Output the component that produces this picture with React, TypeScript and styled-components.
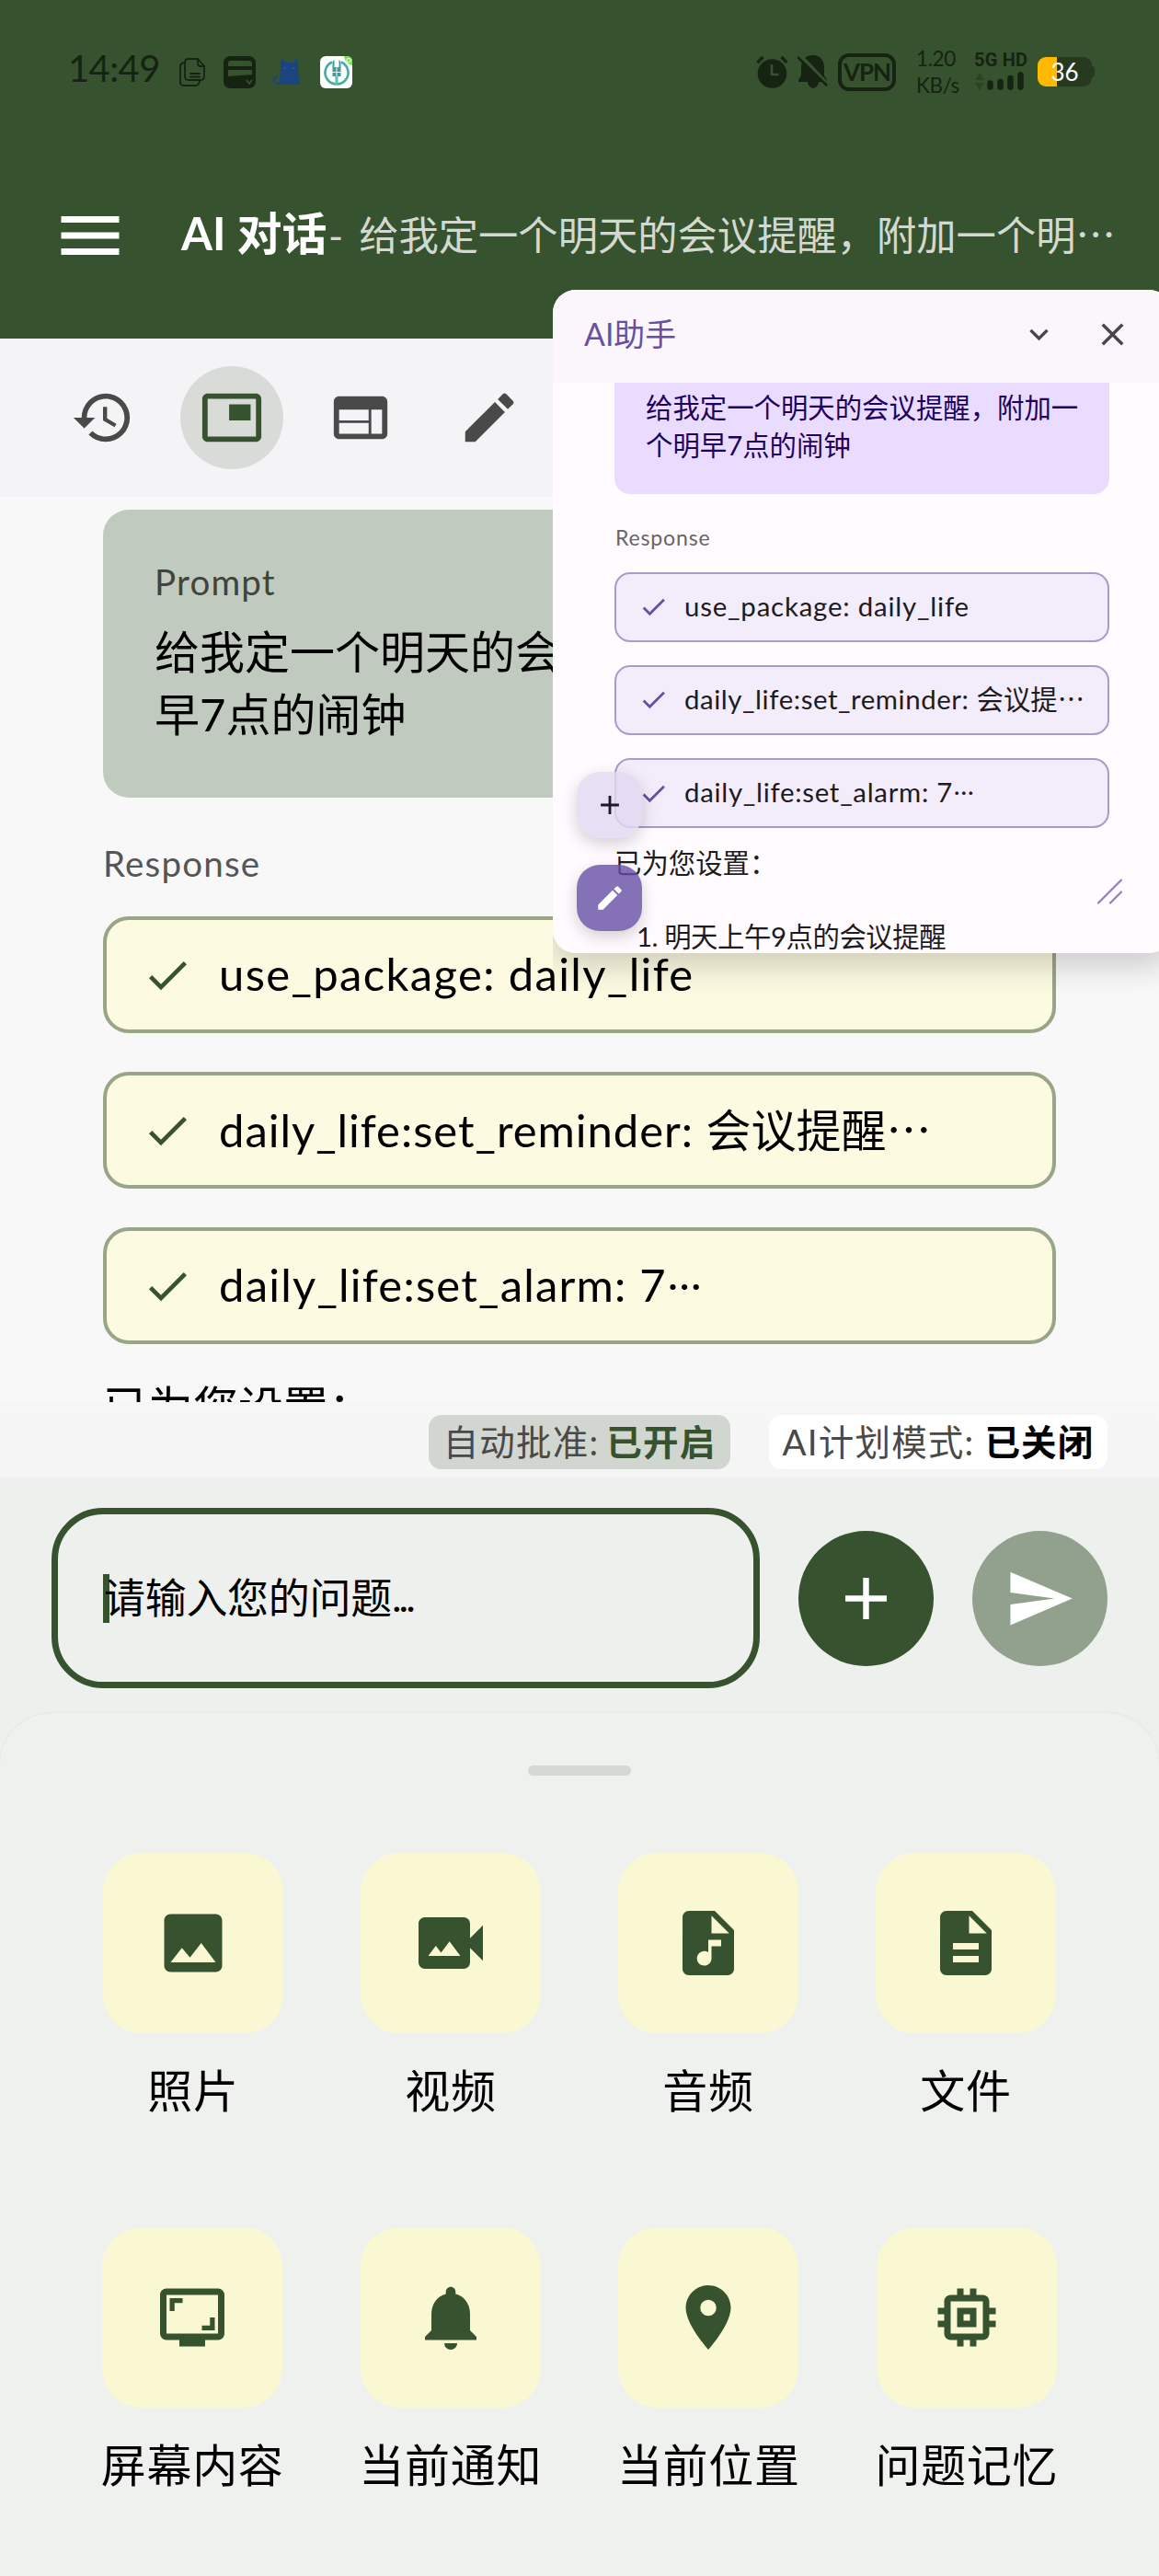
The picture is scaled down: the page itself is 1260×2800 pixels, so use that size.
import React from "react";
import styled, { createGlobalStyle } from "styled-components";
import {
  MdAdd,
  MdAudioFile,
  MdCheck,
  MdDescription,
  MdEdit,
  MdHistory,
  MdImage,
  MdLocationOn,
  MdMemory,
  MdMenu,
  MdNotifications,
  MdPictureInPicture,
  MdScreenshotMonitor,
  MdSend,
  MdVideoCameraBack,
  MdWeb,
  MdOutlineKeyboardArrowDown,
  MdClose,
} from "react-icons/md";

const green = "#37522e";
const statusInk = "#162312";
const purple = "#6750a4";

const GlobalStyle = createGlobalStyle`
  *, *::before, *::after { box-sizing: border-box; }
  html, body { margin: 0; padding: 0; }
  body {
    width: 1260px;
    font-family: Lato, "Noto Sans CJK SC", sans-serif;
    color: #000;
    background: #eef0ed;
  }
  svg { display: block; flex: none; }
`;

const Screen = styled.main`
  position: relative;
  display: flex;
  flex-direction: column;
  width: 1260px;
  height: 2800px;
  overflow: hidden;
  background: #eef0ed;
  > * { flex-shrink: 0; }
`;

const Run = styled.span<{ $ls?: number }>`
  letter-spacing: ${(p) => p.$ls ?? 0}px;
`;

/* Chinese runs, where the ellipsis sits at mid height */
const Cjk = styled.span`
  font-family: "Noto Sans CJK SC", sans-serif;
  letter-spacing: 0;
`;

/* An ellipsis after a Latin run, raised to the same mid height */
const RaisedDots = styled.span`
  position: relative;
  top: -0.27em;
  margin-left: 0.02em;
  letter-spacing: 0.06em;
`;

const Gap = styled.span<{ $w: number }>`
  flex: none;
  width: ${(p) => p.$w}px;
`;

/* ---------- header ---------- */

const Header = styled.header`
  height: 368px;
  background: ${green};
`;

const StatusBar = styled.div`
  display: flex;
  align-items: center;
  justify-content: space-between;
  height: 156px;
  padding: 0 70px 0 74px;
  color: ${statusInk};
`;

const StatusGroup = styled.div`
  display: flex;
  align-items: center;
`;

const Clock = styled.span`
  width: 121px;
  font-size: 40px;
  line-height: 44px;
  letter-spacing: -0.6px;
  margin-top: -8px;
`;

const Vpn = styled.span`
  display: flex;
  align-items: center;
  justify-content: center;
  width: 63px;
  height: 41px;
  margin-left: 11px;
  border: 4px solid ${statusInk};
  border-radius: 12px;
  font-size: 26px;
  font-weight: 700;
  letter-spacing: -1px;
`;

const Speed = styled.div`
  display: flex;
  flex-direction: column;
  width: 44px;
  margin-left: 22px;
  margin-right: 1px;
  font-size: 22.5px;
  line-height: 29px;
  letter-spacing: -0.4px;
  white-space: nowrap;
`;

const Signal = styled.div`
  display: flex;
  flex-direction: column;
  gap: 5px;
  width: 58px;
  margin: -2px 0 0 18px;
  font: 700 20px/16px Roboto, sans-serif;
  letter-spacing: 0.2px;
  white-space: nowrap;
`;

const Battery = styled.div`
  display: flex;
  align-items: center;
  justify-content: center;
  width: 59px;
  height: 32px;
  margin-left: 11px;
  border-radius: 9px;
  background: linear-gradient(90deg, #ffb900 21px, #26391f 21px);
  color: #fff;
  font-size: 26px;
  line-height: 32px;
`;

const BatteryCap = styled.div`
  width: 3px;
  height: 12px;
  border-radius: 0 3px 3px 0;
  background: #26391f;
`;

const TitleRow = styled.div`
  display: flex;
  align-items: center;
  height: 200px;
  padding-left: 56px;
  color: #fff;
  white-space: nowrap;
`;

const Title = styled.h1`
  width: 160px;
  margin: -6px 0 0 57px;
  font-size: 49px;
  font-weight: 700;
  line-height: 68px;
`;

const Subtitle = styled.span`
  margin-top: -5px;
  font-size: 43.3px;
  line-height: 60px;
  word-spacing: 6px;
  color: rgba(255, 255, 255, 0.8);
`;

/* ---------- toolbar ---------- */

const Toolbar = styled.nav`
  display: flex;
  align-items: center;
  gap: 28px;
  height: 172px;
  padding-left: 56px;
  background: #f4f4f7;
`;

const ToolButton = styled.button<{ $active?: boolean }>`
  display: flex;
  align-items: center;
  justify-content: center;
  width: 112px;
  height: 112px;
  padding: 0;
  border: 0;
  border-radius: 50%;
  background: ${(p) => (p.$active ? "#d9dbd8" : "transparent")};
  color: ${(p) => (p.$active ? green : "#494949")};
`;

/* ---------- conversation ---------- */

const Chat = styled.section`
  display: flex;
  flex-direction: column;
  height: 984px;
  padding: 14px 112px 0;
  overflow: hidden;
  background: #f8f8f8;
`;

const PromptCard = styled.div`
  display: flex;
  flex-direction: column;
  gap: 20px;
  flex: none;
  height: 313px;
  padding: 55px 0 0 56px;
  border-radius: 28px;
  background: #c1cabf;
`;

const SmallLabel = styled.div`
  font-size: 38.5px;
  line-height: 46px;
  letter-spacing: 1.2px;
  color: #3f443e;
`;

const ResponseLabel = styled(SmallLabel)`
  flex: none;
  margin: 48px 0 35px;
  color: #555;
`;

const Body = styled.p`
  flex: none;
  margin: 0;
  font-size: 49px;
  line-height: 67.5px;
  white-space: nowrap;
`;

const ToolCalls = styled.div`
  display: flex;
  flex-direction: column;
  flex: none;
  gap: 42.2px;
  margin-bottom: 35px;
`;

const ToolCall = styled.div`
  display: flex;
  align-items: center;
  gap: 28px;
  height: 127px;
  padding-left: 38px;
  border: 4px solid #99a587;
  border-radius: 28px;
  background: #fcfae1;
  font-size: 49px;
  line-height: 66px;
  white-space: nowrap;
  svg { color: ${green}; }
  > span { margin-top: -4px; }
`;

const ModeStrip = styled.div`
  display: flex;
  justify-content: flex-end;
  gap: 42px;
  height: 84px;
  padding: 14px 56px 0;
  background: linear-gradient(#f6f6f6, #f5f5f5 80px, #eeefed);
`;

const Chip = styled.div<{ $on?: boolean }>`
  display: flex;
  align-items: center;
  justify-content: center;
  gap: ${(p) => (p.$on ? 8 : 11)}px;
  width: ${(p) => (p.$on ? 328 : 368)}px;
  height: 59px;
  padding-bottom: 5px;
  border-radius: 14px;
  background: ${(p) => (p.$on ? "#d1d6d0" : "#fff")};
  color: #494949;
  font-size: 38.5px;
  letter-spacing: 1.2px;
  white-space: nowrap;
  b { color: ${(p) => (p.$on ? green : "#000")}; }
`;

/* ---------- composer ---------- */

const Composer = styled.div`
  display: flex;
  align-items: center;
  gap: 42px;
  height: 254px;
  padding: 4px 56px 0;
`;

const InputBox = styled.div`
  display: flex;
  align-items: center;
  width: 770px;
  height: 196px;
  padding-left: 49px;
  border: 7px solid ${green};
  border-radius: 56px;
  font-size: 45px;
  letter-spacing: -0.3px;
  white-space: nowrap;
  > span { margin-top: -5px; }
`;

const Caret = styled.i`
  width: 7px;
  height: 53px;
  margin-right: -6px;
  background: ${green};
`;

const RoundButton = styled.button<{ $muted?: boolean }>`
  display: flex;
  align-items: center;
  justify-content: center;
  width: 147px;
  height: 147px;
  padding: 0;
  border: 0;
  border-radius: 50%;
  background: ${(p) => (p.$muted ? "#92a18e" : green)};
  color: #fff;
`;

/* ---------- attachment sheet ---------- */

const Sheet = styled.section`
  display: flex;
  flex-direction: column;
  height: 938px;
  padding: 57px 28px 0;
  border-radius: 56px 56px 0 0;
  background: #eff1ee;
  box-shadow: 0 0 2px rgba(0, 0, 0, 0.1);
`;

const Handle = styled.div`
  align-self: center;
  flex: none;
  width: 112px;
  height: 11px;
  margin-bottom: 84px;
  border-radius: 6px;
  background: #d6d8d5;
`;

const SheetRow = styled.div`
  display: flex;
  justify-content: space-evenly;
  margin-bottom: 115px;
`;

const Attachment = styled.div`
  display: flex;
  flex-direction: column;
  align-items: center;
  min-width: 196px;
  font-size: 49px;
  line-height: 68px;
  letter-spacing: 0.7px;
  white-space: nowrap;
`;

const Tile = styled.div`
  display: flex;
  align-items: center;
  justify-content: center;
  width: 196px;
  height: 196px;
  margin-bottom: 28px;
  border-radius: 42px;
  background: #faf8d3;
  color: ${green};
`;

/* ---------- floating assistant ---------- */

const FloatingLayer = styled.div`
  position: absolute;
  top: 315px;
  left: 601px;
  width: 659px;
  height: 800px;
  overflow: hidden;
`;

const FloatingShadow = styled.div`
  width: 673px;
  height: 721px;
  border-radius: 25px;
  box-shadow: 0 14px 34px rgba(0, 0, 0, 0.18);
`;

const Floating = styled.aside`
  position: relative;
  width: 673px;
  height: 721px;
  overflow: hidden;
  border-radius: 25px;
  background: #fffbff;
`;

const FloatingHeader = styled.div`
  display: flex;
  align-items: center;
  height: 101px;
  padding: 0 44px 4px 34px;
  background: #fbf6fb;
  color: #49454f;
`;

const FloatingTitle = styled.span`
  flex: 1;
  margin-top: -4px;
  font-size: 33.8px;
  color: ${purple};
`;

const FloatingBody = styled.div`
  display: flex;
  flex-direction: column;
  padding: 0 68px 0 67px;
  font-size: 29.4px;
  line-height: 41px;
  white-space: nowrap;
  color: #1d1b20;
`;

const Bubble = styled.div`
  height: 121px;
  padding: 6px 0 0 34px;
  border-radius: 0 0 17px 17px;
  background: #eadcff;
  color: #21005d;
`;

const MiniLabel = styled.div`
  margin: 33px 0 24px 1px;
  font-size: 23.1px;
  line-height: 28px;
  letter-spacing: 0.8px;
  color: #67646a;
`;

const MiniCalls = styled.div`
  display: flex;
  flex-direction: column;
  gap: 25.7px;
  margin-bottom: 17px;
`;

const MiniCall = styled.div`
  display: flex;
  align-items: center;
  gap: 17px;
  height: 75.5px;
  padding-left: 24px;
  border: 2px solid #a99bca;
  border-radius: 17px;
  background: #f3ecfa;
  svg { color: ${purple}; }
  > span { margin-top: -3px; }
`;

const ListLine = styled.div`
  margin-top: 39px;
  padding-left: 24px;
  letter-spacing: -0.45px;
`;

const Fab = styled.button<{ $top: number; $primary?: boolean }>`
  position: absolute;
  left: 26px;
  top: ${(p) => p.$top}px;
  display: flex;
  align-items: center;
  justify-content: center;
  width: 71px;
  height: 72px;
  padding: 0;
  border: 0;
  border-radius: 25px;
  background: ${(p) => (p.$primary ? "rgba(103,80,164,.8)" : "rgba(226,216,242,.82)")};
  color: ${(p) => (p.$primary ? "#fff" : "#1d192b")};
  box-shadow: 0 6px 18px rgba(0, 0, 0, 0.18);
`;

const ResizeGrip = styled.svg`
  position: absolute;
  left: 591px;
  top: 640px;
`;

/* ---------- drawings ---------- */

const DocsIcon = () => (
  <svg width="28" height="33" viewBox="0 0 28 33" fill="none" stroke={statusInk} strokeWidth="1.8" strokeLinejoin="round">
    <path d="M10 2h10l7 8v11q0 4-4 4H10q-4 0-4-4V6q0-4 4-4Z" />
    <path d="M20 2v5q0 3 3 3h4M6 6q-5 0-5 5v16q0 4 4 4h13q3 0 4-5M12 18h10M12 21.500h10" strokeLinecap="round" />
  </svg>
);

const CardAppIcon = () => (
  <svg width="35" height="35" viewBox="0 0 35 35">
    <path
      fill={statusInk}
      fillRule="evenodd"
      d="M8 0h19q8 0 8 8v19q0 8-8 8H8q-8 0-8-8V8q0-8 8-8ZM5 11h26V8q0-3-3-3H8Q5 5 5 8ZM5 15v7l26-2v-5Z"
    />
    <path d="M25 26l3 4 3-4" fill="none" stroke={green} strokeWidth="1.8" />
  </svg>
);

const CatIcon = () => (
  <svg width="29" height="28" viewBox="0 0 29 28">
    <path fill="#1c4480" d="M9 0l5 4h7l5-4q1 4 1 8 .3 10 2 20H8q-2-1-1-4 1-9 1-16 0-4 1-8Z" />
    <path d="M5 19q-4 0-4 4 0 4 8 4" fill="none" stroke="#1c4480" strokeWidth="2" />
    <path d="M12 10h1.500M21 10h1.500" stroke="#38619a" strokeWidth="1.600" />
  </svg>
);

const BankIcon = () => (
  <svg width="35" height="35" viewBox="0 0 35 35">
    <rect width="35" height="35" rx="6" fill="#fff" />
    <path d="M26 0h3q6 0 6 6v4Q27 8 26 0Z" fill="#7ed957" />
    <circle cx="31" cy="4.500" r="2.200" fill="none" stroke="#d9f7cf" strokeWidth="1.200" />
    <path d="M13 6.500A12.500 12.500 0 1 0 23 6.500" fill="none" stroke="#48aaa5" strokeWidth="2.600" />
    <path d="M18 20v11" stroke="#5cc0ab" strokeWidth="3" />
    <path d="M13.500 6l2-2v8h5V4l2 2v16h-9Z" fill="#3f9c9c" />
    <path d="M18 12v10M13 17.500h10" stroke="#e6f5f3" strokeWidth="1" />
  </svg>
);

const AlarmIcon = () => (
  <svg width="35" height="36" viewBox="0 0 35 36">
    <circle cx="17.500" cy="20" r="15.800" fill={statusInk} />
    <path d="M1.500 8l6-6M33.500 8l-6-6" stroke={statusInk} strokeWidth="3.200" />
    <path d="M17 10v11h7.500" fill="none" stroke={green} strokeWidth="2.600" />
  </svg>
);

const MutedBellIcon = () => (
  <svg width="33" height="36" viewBox="0 0 33 36">
    <path fill={statusInk} d="M17 0C25 0 29 6 29 13v9l3 5v2h-9c-1 9-11 9-12 0H1v-2l3-5v-9C4 6 8 0 17 0Z" />
    <path d="M3 0l31 33" stroke={green} strokeWidth="4" />
    <path d="M0 2l32 31" stroke={statusInk} strokeWidth="2.600" />
  </svg>
);

const SignalBars = () => (
  <svg width="57" height="20" viewBox="0 0 57 20">
    <path d="M6 1l5 8H1ZM6 20l5-8H1Z" fill="#2a4422" />
    <path d="M17.500 12.500v4M28.500 11v5.500M39.500 7v9.500M50.500 3.500v13" stroke={statusInk} strokeWidth="6.500" strokeLinecap="round" />
  </svg>
);

const attachments = [
  [
    { label: "照片", Icon: MdImage },
    { label: "视频", Icon: MdVideoCameraBack },
    { label: "音频", Icon: MdAudioFile },
    { label: "文件", Icon: MdDescription },
  ],
  [
    { label: "屏幕内容", Icon: MdScreenshotMonitor },
    { label: "当前通知", Icon: MdNotifications },
    { label: "当前位置", Icon: MdLocationOn },
    { label: "问题记忆", Icon: MdMemory },
  ],
];

const calls = [
  { name: "use_package: daily_life", arg: "", miniArg: "", track: 1.35 },
  { name: "daily_life:set_reminder: ", arg: "会议提醒…", miniArg: "会议提…", track: 0.95 },
  { name: "daily_life:set_alarm: 7", arg: "", miniArg: "", track: 1.2, dots: true },
];

export default function App() {
  return (
    <Screen lang="zh-CN">
      <GlobalStyle />
      <Header>
        <StatusBar>
          <StatusGroup>
            <Clock>14:49</Clock>
            <DocsIcon />
            <Gap $w={20} />
            <CardAppIcon />
            <Gap $w={19} />
            <CatIcon />
            <Gap $w={22} />
            <BankIcon />
          </StatusGroup>
          <StatusGroup>
            <AlarmIcon />
            <Gap $w={10} />
            <MutedBellIcon />
            <Vpn>VPN</Vpn>
            <Speed>
              <span>1.20</span>
              <span>KB/s</span>
            </Speed>
            <Signal>
              <span>5G HD</span>
              <SignalBars />
            </Signal>
            <Battery>36</Battery>
            <BatteryCap />
          </StatusGroup>
        </StatusBar>
        <TitleRow>
          <MdMenu size={84} />
          <Title>AI 对话</Title>
          <Subtitle>
            - 给我定一个明天的会议提醒，附加一个明<Cjk>…</Cjk>
          </Subtitle>
        </TitleRow>
      </Header>

      <Toolbar>
        <ToolButton><MdHistory size={70} /></ToolButton>
        <ToolButton $active><MdPictureInPicture size={70} /></ToolButton>
        <ToolButton><MdWeb size={70} /></ToolButton>
        <ToolButton><MdEdit size={70} /></ToolButton>
      </Toolbar>

      <Chat>
        <PromptCard>
          <SmallLabel>Prompt</SmallLabel>
          <Body>
            给我定一个明天的会议提醒，附加一个明
            <br />
            早7点的闹钟
          </Body>
        </PromptCard>
        <ResponseLabel>Response</ResponseLabel>
        <ToolCalls>
          {calls.map((c) => (
            <ToolCall key={c.name}>
              <MdCheck size={56} />
              <span>
                <Run $ls={c.track}>{c.name}</Run>
                {c.arg && <Cjk>{c.arg}</Cjk>}
                {c.dots && <RaisedDots>…</RaisedDots>}
              </span>
            </ToolCall>
          ))}
        </ToolCalls>
        <Body>已为您设置：</Body>
      </Chat>

      <ModeStrip>
        <Chip $on>
          <span>自动批准:</span>
          <b>已开启</b>
        </Chip>
        <Chip>
          <span>AI计划模式:</span>
          <b>已关闭</b>
        </Chip>
      </ModeStrip>

      <Composer>
        <InputBox>
          <Caret />
          <span>请输入您的问题</span>
          <Run $ls={-3}>...</Run>
        </InputBox>
        <RoundButton><MdAdd size={77} /></RoundButton>
        <RoundButton $muted><MdSend size={77} /></RoundButton>
      </Composer>

      <Sheet>
        <Handle />
        {attachments.map((row, i) => (
          <SheetRow key={i}>
            {row.map(({ label, Icon }) => (
              <Attachment key={label}>
                <Tile><Icon size={84} /></Tile>
                {label}
              </Attachment>
            ))}
          </SheetRow>
        ))}
      </Sheet>

      <FloatingLayer>
        <FloatingShadow>
          <Floating>
            <FloatingHeader>
              <FloatingTitle>AI助手</FloatingTitle>
              <MdOutlineKeyboardArrowDown size={41} />
              <Gap $w={39} />
              <MdClose size={41} />
            </FloatingHeader>
            <FloatingBody>
              <Bubble>
                给我定一个明天的会议提醒，附加一
                <br />
                个明早7点的闹钟
              </Bubble>
              <MiniLabel>Response</MiniLabel>
              <MiniCalls>
                {calls.map((c) => (
                  <MiniCall key={c.name}>
                    <MdCheck size={33} />
                    <span>
                      <Run $ls={c.track * 0.6}>{c.name}</Run>
                      {c.miniArg && <Cjk>{c.miniArg}</Cjk>}
                      {c.dots && <RaisedDots>…</RaisedDots>}
                    </span>
                  </MiniCall>
                ))}
              </MiniCalls>
              <div>已为您设置：</div>
              <ListLine>1. 明天上午9点的会议提醒</ListLine>
            </FloatingBody>
            <Fab $top={524}><MdAdd size={34} /></Fab>
            <Fab $top={625} $primary><MdEdit size={34} /></Fab>
            <ResizeGrip width="28" height="28" viewBox="0 0 28 28" stroke="#8f7dbd" strokeWidth="2.200" strokeLinecap="round">
              <path d="M2 26.500L27 1.500M15 26.500L27 14.500" />
            </ResizeGrip>
          </Floating>
        </FloatingShadow>
      </FloatingLayer>
    </Screen>
  );
}
